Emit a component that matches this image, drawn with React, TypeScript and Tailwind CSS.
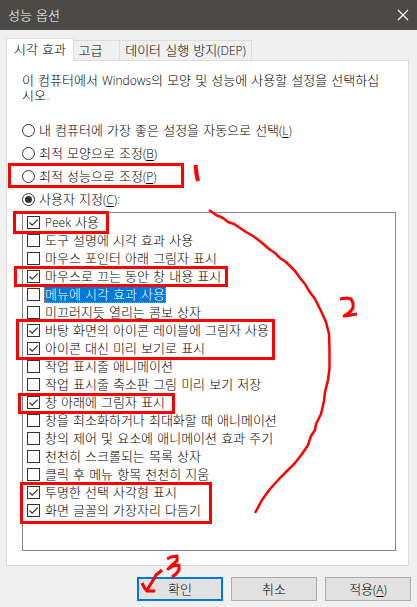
import type { ReactNode } from "react";

const effects = [
  { label: "Peek 사용", latin: "Peek", checked: true },
  { label: "도구 설명에 시각 효과 사용" },
  { label: "마우스 포인터 아래 그림자 표시" },
  { label: "마우스로 끄는 동안 창 내용 표시", checked: true },
  { label: "메뉴에 시각 효과 사용", selected: true },
  { label: "미끄러지듯 열리는 콤보 상자" },
  { label: "바탕 화면의 아이콘 레이블에 그림자 사용", checked: true },
  { label: "아이콘 대신 미리 보기로 표시", checked: true },
  { label: "작업 표시줄 애니메이션" },
  { label: "작업 표시줄 축소판 그림 미리 보기 저장" },
  { label: "창 아래에 그림자 표시", checked: true },
  { label: "창을 최소화하거나 최대화할 때 애니메이션" },
  { label: "창의 제어 및 요소에 애니메이션 효과 주기" },
  { label: "천천히 스크롤되는 목록 상자" },
  { label: "클릭 후 메뉴 항목 천천히 지움" },
  { label: "투명한 선택 사각형 표시", checked: true },
  { label: "화면 글꼴의 가장자리 다듬기", checked: true },
];

const modes = [
  { label: "내 컴퓨터에 가장 좋은 설정을 자동으로 선택", hotkey: "L" },
  { label: "최적 모양으로 조정", hotkey: "B" },
  { label: "최적 성능으로 조정", hotkey: "P" },
  { label: "사용자 지정", hotkey: "C", suffix: ":", checked: true },
];

function Latin({ children }: { children: ReactNode }) {
  return (
    <span className="text-xs leading-none font-['Open_Sans','Noto_Sans',sans-serif]">
      {children}
    </span>
  );
}

function Hotkey({ letter, suffix }: { letter: string; suffix?: string }) {
  return (
    <Latin>
      (<span className="underline underline-offset-2">{letter}</span>){suffix}
    </Latin>
  );
}

function ModeRadio({ label, hotkey, suffix, checked }: (typeof modes)[number]) {
  return (
    <label className="flex items-center gap-1 h-[17px]">
      <span className="grid place-items-center">
        <input
          type="radio"
          name="mode"
          defaultChecked={checked}
          className="peer col-start-1 row-start-1 appearance-none size-[13px] rounded-full border border-[#333] bg-white"
        />
        <span className="col-start-1 row-start-1 size-[7px] rounded-full bg-[#333] invisible peer-checked:visible" />
      </span>
      <span>
        {label}
        <Hotkey letter={hotkey} suffix={suffix} />
      </span>
    </label>
  );
}

function EffectItem({ label, latin, checked, selected }: (typeof effects)[number]) {
  return (
    <li>
      <label className="flex items-center gap-1 h-[18px]">
        <span className="grid place-items-center">
          <input
            type="checkbox"
            defaultChecked={checked}
            className="peer col-start-1 row-start-1 appearance-none size-[13px] border border-[#333] bg-white"
          />
          <svg
            viewBox="0 0 13 13"
            className="col-start-1 row-start-1 size-[13px] invisible peer-checked:visible pointer-events-none"
          >
            <path d="M2.5 6.5 5.2 9.2 10.7 3.7" fill="none" stroke="#333" strokeWidth="1.2" />
          </svg>
        </span>
        <span
          className={
            selected
              ? "h-[17px] leading-[17px] px-px bg-[#0078d7] text-white outline-1 -outline-offset-1 outline-dotted outline-[#ff8728]"
              : "px-px leading-[17px]"
          }
        >
          {latin ? (
            <>
              <Latin>{latin}</Latin>
              {label.slice(latin.length)}
            </>
          ) : (
            label
          )}
        </span>
      </label>
    </li>
  );
}

// Red pen notes drawn over the dialog
function Notes() {
  return (
    <svg
      width="417"
      height="607"
      viewBox="0 0 417 607"
      fill="none"
      stroke="#ff0000"
      strokeWidth="3"
      className="absolute top-0 left-0 pointer-events-none"
    >
      <rect x="9.5" y="164.5" width="173" height="22" />
      <rect x="14.5" y="212.5" width="93" height="20" />
      <rect x="15.5" y="267.5" width="211" height="18" />
      <rect x="17.5" y="320.5" width="256" height="38" />
      <rect x="19.5" y="394.5" width="154" height="18" />
      <rect x="21.5" y="483.5" width="189" height="39" />
      <g strokeLinejoin="round">
        <path
          strokeWidth="2.5"
          d="M209 210 216 215 223 218 228 222 234 224 240 228 246 232 253 236 261 242 269 249 275 253 280 258 286 262 295 271 300 278 305 284 309 291 315 299 321 311 326 322 329 334 329.5 350 329.5 368 328 380 325 392 324 401 321 414 316 424 315 430 311 436 308 445 302 454 295 463 280 478 270 489 262 500 255 513"
        />
        <path strokeWidth="4" d="M195.5 165 196.5 174 198 181" />
        <path d="M340 299 347 298 351 299 353 303 353 308 350 312 344 316 351 315 357 314" />
        <path d="M167 559 171 557 177 556 177 561 173 564 168 569 173 566 179 565 179 570 176 574 172 577" />
        <path d="M162 570 156 575 152 582 147 590M142 583 144 587 147 591 155 591" />
      </g>
    </svg>
  );
}

export default function App() {
  return (
    <div className="relative min-h-screen bg-[#f0f0f0] pb-1.5 text-[13px] leading-[15px] text-black font-['DejaVu_Sans','Noto_Sans_CJK_KR',sans-serif] font-light">
      <header className="flex items-center justify-between h-[30px] pl-2 pr-2 bg-[#4b4a48] text-white">
        <h1>성능 옵션</h1>
        <button type="button" aria-label="닫기">
          <svg width="12" height="12" viewBox="0 0 12 12" stroke="currentColor" strokeWidth="1.2">
            <path d="M1 1 11 11M11 1 1 11" />
          </svg>
        </button>
      </header>

      <main className="px-1.5 pt-2 mr-0.5">
        <div role="tablist" className="flex items-end">
          <button
            type="button"
            role="tab"
            aria-selected="true"
            className="z-10 -mb-px h-[23px] w-[68px] pb-0.5 border border-b-0 border-[#dcdcdc] bg-white"
          >
            시각 효과
          </button>
          <button
            type="button"
            role="tab"
            aria-selected="false"
            className="h-5 w-[46px] pr-3 border-t border-r border-[#dcdcdc]"
          >
            고급
          </button>
          <button
            type="button"
            role="tab"
            aria-selected="false"
            className="h-5 w-[132px] border-t border-r border-[#dcdcdc] whitespace-nowrap"
          >
            데이터 실행 방지<Latin>(DEP)</Latin>
          </button>
        </div>

        <section className="border border-[#dcdcdc] bg-white pt-3 pb-3.5 pl-[15px] pr-3">
          <p className="pr-2">
            이 컴퓨터에서 <Latin>Windows</Latin>의 모양 및 성능에 사용할 설정을 선택하십시오.
          </p>
          <div className="mt-[19px] flex flex-col gap-1.5">
            {modes.map((mode) => (
              <ModeRadio key={mode.hotkey} {...mode} />
            ))}
          </div>
          <ul className="mt-1 min-h-[339px] border border-[#828790] pl-1">
            {effects.map((effect) => (
              <EffectItem key={effect.label} {...effect} />
            ))}
          </ul>
        </section>
      </main>

      <footer className="flex justify-end gap-2 mt-[11px] pr-1.5">
        <button type="button" className="w-[86px] h-6 border-2 border-[#0078d7] bg-[#e1e1e1]">
          확인
        </button>
        <button type="button" className="w-[86px] h-6 border border-[#adadad] bg-[#e1e1e1]">
          취소
        </button>
        <button type="button" className="w-[86px] h-6 border border-[#adadad] bg-[#e1e1e1]">
          적용
          <Hotkey letter="A" />
        </button>
      </footer>

      <Notes />
    </div>
  );
}
